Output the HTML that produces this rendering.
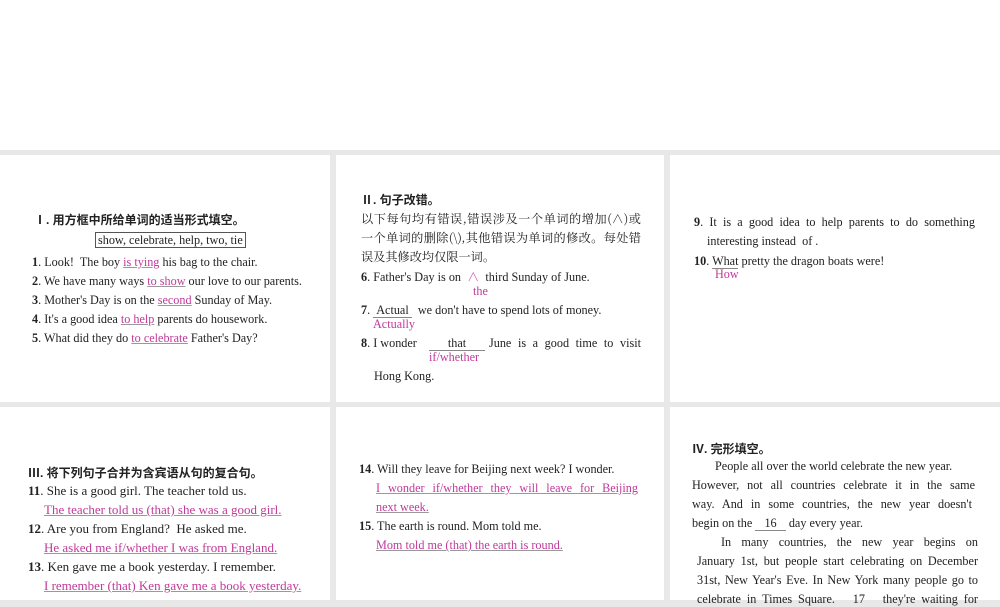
<!DOCTYPE html>
<html><head><meta charset="utf-8"><style>
*{margin:0;padding:0}
body{width:1000px;height:600px;background:#e8e8e8;position:relative;overflow:hidden;font-family:"Liberation Serif","Noto Serif CJK SC",serif;font-size:12.2px;color:#222}
.top{position:absolute;left:0;top:0;width:1000px;height:150px;background:#fff}
.p{position:absolute;background:#fff}
.l{position:absolute;white-space:nowrap}
.h{font-family:"Liberation Sans","Noto Sans CJK SC",sans-serif;font-weight:bold;font-size:12px}
.c{font-family:"Noto Serif CJK SC",serif;font-size:12.2px}
.k{color:#c0399a}
.u{text-decoration:underline;text-decoration-color:#999}
b{font-weight:bold}
.j{text-align:justify;text-align-last:justify;white-space:normal}
.b3{font-size:13px}
</style></head><body>
<div class="top"></div>
<div class="p" style="left:0;top:155px;width:330px;height:247px"></div>
<div class="p" style="left:336px;top:155px;width:328px;height:247px"></div>
<div class="p" style="left:670px;top:155px;width:330px;height:247px"></div>
<div class="p" style="left:0;top:407px;width:330px;height:193px"></div>
<div class="p" style="left:336px;top:407px;width:328px;height:193px"></div>
<div class="p" style="left:670px;top:407px;width:330px;height:193px"></div>

<div class="l h" style="left:34px;top:211px">Ⅰ. 用方框中所给单词的适当形式填空。</div>
<div class="l" style="left:95px;top:232px;border:1px solid #555;padding:0 2px;line-height:14px">show, celebrate, help, two, tie</div>
<div class="l" style="left:32px;top:255px"><b>1</b>. Look!&nbsp; The boy <span class="k u">is tying</span> his bag to the chair.</div>
<div class="l" style="left:32px;top:274px"><b>2</b>. We have many ways <span class="k u">to show</span> our love to our parents.</div>
<div class="l" style="left:32px;top:293px"><b>3</b>. Mother's Day is on the <span class="k u">second</span> Sunday of May.</div>
<div class="l" style="left:32px;top:312px"><b>4</b>. It's a good idea <span class="k u">to help</span> parents do housework.</div>
<div class="l" style="left:32px;top:331px"><b>5</b>. What did they do <span class="k u">to celebrate</span> Father's Day?</div>

<div class="l h" style="left:361px;top:191px">Ⅱ. 句子改错。</div>
<div class="l c j" style="left:361px;top:210px;width:280px">以下每句均有错误,错误涉及一个单词的增加(∧)或</div>
<div class="l c j" style="left:361px;top:229px;width:280px">一个单词的删除(\),其他错误为单词的修改。每处错</div>
<div class="l c" style="left:361px;top:248px">误及其修改均仅限一词。</div>
<div class="l" style="left:361px;top:268px"><b>6</b>. Father's Day is on &nbsp;<span class="k">∧</span>&nbsp; third Sunday of June.</div>
<div class="l k" style="left:473px;top:284px">the</div>
<div class="l" style="left:361px;top:303px"><b>7</b>. <span style="border-bottom:1px solid #888">&nbsp;Actual&nbsp;</span>&nbsp; we don't have to spend lots of money.</div>
<div class="l k" style="left:373px;top:317px">Actually</div>
<div class="l" style="left:361px;top:336px"><b>8</b>. I wonder</div>
<div class="l" style="left:429px;top:336px;border-bottom:1px solid #888;width:56px;text-align:center;line-height:14px">that</div>
<div class="l j" style="left:489px;top:336px;width:152px">June is a good time to visit</div>
<div class="l k" style="left:429px;top:350px">if/whether</div>
<div class="l" style="left:374px;top:369px">Hong Kong.</div>

<div class="l j" style="left:694px;top:215px;width:281px"><b>9</b>. It is a good idea to help parents to do something</div>
<div class="l" style="left:707px;top:234px">interesting instead &nbsp;of .</div>
<div class="l" style="left:694px;top:254px"><b>10</b>. <span style="border-bottom:1px solid #888">What</span> pretty the dragon boats were!</div>
<div class="l k" style="left:715px;top:267px">How</div>

<div class="l h" style="left:28px;top:464px">Ⅲ. 将下列句子合并为含宾语从句的复合句。</div>
<div class="l b3" style="left:28px;top:483px"><b>11</b>. She is a good girl. The teacher told us.</div>
<div class="l k u b3" style="left:44px;top:502px">The teacher told us (that) she was a good girl.</div>
<div class="l b3" style="left:28px;top:521px"><b>12</b>. Are you from England?&nbsp; He asked me.</div>
<div class="l k u b3" style="left:44px;top:540px">He asked me if/whether I was from England.</div>
<div class="l b3" style="left:28px;top:559px"><b>13</b>. Ken gave me a book yesterday. I remember.</div>
<div class="l k u b3" style="left:44px;top:578px">I remember (that) Ken gave me a book yesterday.</div>

<div class="l" style="left:359px;top:462px"><b>14</b>. Will they leave for Beijing next week? I wonder.</div>
<div class="l k u j" style="left:376px;top:481px;width:262px">I wonder if/whether they will leave for Beijing</div>
<div class="l k u" style="left:376px;top:500px">next week.</div>
<div class="l" style="left:359px;top:519px"><b>15</b>. The earth is round. Mom told me.</div>
<div class="l k u" style="left:376px;top:538px">Mom told me (that) the earth is round.</div>

<div class="l h" style="left:692px;top:440px">Ⅳ. 完形填空。</div>
<div class="l" style="left:715px;top:459px">People all over the world celebrate the new year.</div>
<div class="l j" style="left:692px;top:478px;width:283px">However, not all countries celebrate it in the same</div>
<div class="l j" style="left:692px;top:497px;width:280px">way. And in some countries, the new year doesn't</div>
<div class="l" style="left:692px;top:516px">begin on the <span style="border-bottom:1px solid #888">&nbsp;&nbsp;&nbsp;16&nbsp;&nbsp;&nbsp;</span> day every year.</div>
<div class="l j" style="left:721px;top:535px;width:257px">In many countries, the new year begins on</div>
<div class="l j" style="left:697px;top:554px;width:281px">January 1st, but people start celebrating on December</div>
<div class="l j" style="left:697px;top:573px;width:281px">31st, New Year's Eve. In New York many people go to</div>
<div class="l j" style="left:697px;top:592px;width:281px">celebrate in Times Square. &nbsp;&nbsp;17&nbsp;&nbsp; they're waiting for</div>
</body></html>
